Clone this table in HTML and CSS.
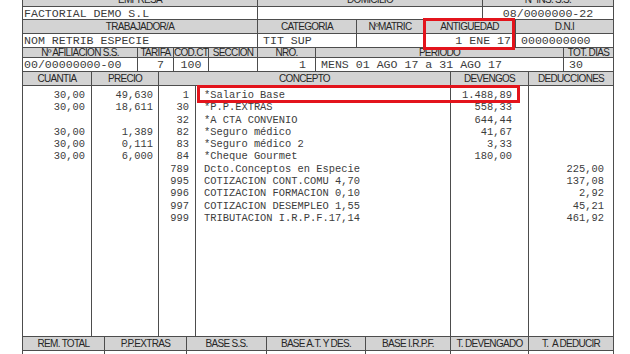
FILE: index.html
```html
<!DOCTYPE html>
<html lang="es">
<head>
<meta charset="utf-8">
<title>Nómina</title>
<link rel="stylesheet" href="styles.css">
</head>
<body>
<div class="sheet">
  <div class="row row-a lbl-row h15">
    <div class="lbl">EMPRESA</div>
    <div class="lbl">DOMICILIO</div>
    <div class="lbl">Nº INS. S.S.</div>
  </div>
  <div class="row row-a h13">
    <div class="val">FACTORIAL DEMO S.L</div>
    <div class="val"></div>
    <div class="val center">08/0000000-22</div>
  </div>
  <div class="row row-b h14">
    <div class="lbl">TRABAJADOR/A</div>
    <div class="lbl">CATEGORIA</div>
    <div class="lbl">NºMATRIC</div>
    <div class="lbl">ANTIGUEDAD</div>
    <div class="lbl">D.N.I</div>
  </div>
  <div class="row row-b h14">
    <div class="val">NOM RETRIB ESPECIE</div>
    <div class="val pad-l">TIT SUP</div>
    <div class="val"></div>
    <div class="val right pad-r4">1 ENE 17</div>
    <div class="val pad-l">0000000000</div>
  </div>
  <div class="row row-c h10">
    <div class="lbl">Nº AFILIACION S.S.</div>
    <div class="lbl">TARIFA</div>
    <div class="lbl">COD.CT</div>
    <div class="lbl">SECCION</div>
    <div class="lbl">NRO.</div>
    <div class="lbl">PERIODO</div>
    <div class="lbl">TOT. DIAS</div>
  </div>
  <div class="row row-c h14">
    <div class="val">00/00000000-00</div>
    <div class="val right pad-r9">7</div>
    <div class="val center">100</div>
    <div class="val"></div>
    <div class="val right pad-r9">1</div>
    <div class="val pad-l">MENS 01 AGO 17 a 31 AGO 17</div>
    <div class="val pad-l">30</div>
  </div>
  <div class="row row-d h14">
    <div class="lbl">CUANTIA</div>
    <div class="lbl">PRECIO</div>
    <div class="lbl">CONCEPTO</div>
    <div class="lbl">DEVENGOS</div>
    <div class="lbl">DEDUCCIONES</div>
  </div>
  <div class="lines">
    <div class="col num pr6">
      <div class="ln">30,00</div><div class="ln">30,00</div><div class="ln"></div><div class="ln">30,00</div><div class="ln">30,00</div><div class="ln">30,00</div>
    </div>
    <div class="col num pr5">
      <div class="ln">49,630</div><div class="ln">18,611</div><div class="ln"></div><div class="ln">1,389</div><div class="ln">0,111</div><div class="ln">6,000</div>
    </div>
    <div class="col num pr6">
      <div class="ln">1</div><div class="ln">30</div><div class="ln">32</div><div class="ln">82</div><div class="ln">83</div><div class="ln">84</div><div class="ln">789</div><div class="ln">995</div><div class="ln">996</div><div class="ln">997</div><div class="ln">999</div>
    </div>
    <div class="col text">
      <div class="ln">*Salario Base</div>
      <div class="ln">*P.P.EXTRAS</div>
      <div class="ln">*A CTA CONVENIO</div>
      <div class="ln">*Seguro médico</div>
      <div class="ln">*Seguro médico 2</div>
      <div class="ln">*Cheque Gourmet</div>
      <div class="ln">Dcto.Conceptos en Especie</div>
      <div class="ln">COTIZACION CONT.COMU 4,70</div>
      <div class="ln">COTIZACION FORMACION 0,10</div>
      <div class="ln">COTIZACION DESEMPLEO 1,55</div>
      <div class="ln">TRIBUTACION I.R.P.F.17,14</div>
    </div>
    <div class="col num pr16">
      <div class="ln">1.488,89</div><div class="ln">558,33</div><div class="ln">644,44</div><div class="ln">41,67</div><div class="ln">3,33</div><div class="ln">180,00</div>
    </div>
    <div class="col num pr9">
      <div class="ln"></div><div class="ln"></div><div class="ln"></div><div class="ln"></div><div class="ln"></div><div class="ln"></div>
      <div class="ln">225,00</div><div class="ln">137,08</div><div class="ln">2,92</div><div class="ln">45,21</div><div class="ln">461,92</div>
    </div>
  </div>
  <div class="row row-e h14">
    <div class="lbl">REM. TOTAL</div>
    <div class="lbl">P.P.EXTRAS</div>
    <div class="lbl">BASE S.S.</div>
    <div class="lbl">BASE A.T. Y DES.</div>
    <div class="lbl">BASE I.R.P.F.</div>
    <div class="lbl">T. DEVENGADO</div>
    <div class="lbl">T.&nbsp; A DEDUCIR</div>
  </div>
  <div class="row row-e h14">
    <div class="val"></div><div class="val"></div><div class="val"></div><div class="val"></div><div class="val"></div><div class="val"></div><div class="val"></div>
  </div>
  <div class="mark mark-antig"></div>
  <div class="mark mark-salario"></div>
</div>
</body>
</html>
```

FILE: styles.css
```css
html, body {
  margin: 0;
  padding: 0;
  background: #ffffff;
}

.sheet {
  position: relative;
  margin: -8px 0 0 22px;
  width: 592px;
  box-sizing: border-box;
  border-right: 1px solid #4d4d4d;
}

.row {
  display: grid;
  box-sizing: border-box;
  border-bottom: 1px solid #4d4d4d;
}

.h15 { height: 15px; }
.h14 { height: 14px; }
.h13 { height: 13px; }
.h10 { height: 10px; }

.row-a { grid-template-columns: 235px 225px 131px; }
.row-b { grid-template-columns: 235px 99px 67px 92px 98px; }
.row-c { grid-template-columns: 115px 36px 35px 49px 58px 248px 50px; }
.row-d { grid-template-columns: 69px 67px 292px 78px 85px; }
.row-e { grid-template-columns: 82px 82px 80px 99px 85px 78px 85px; }

.row > div {
  box-sizing: border-box;
  border-left: 1px solid #4d4d4d;
  display: flex;
  align-items: center;
  overflow: hidden;
  white-space: nowrap;
  min-width: 0;
}

.lbl {
  background: #d3d3d3;
  justify-content: center;
  font-family: "Liberation Sans", Arial, sans-serif;
  font-size: 10px;
  letter-spacing: -0.7px;
  color: #262626;
}

.val {
  font-family: "Liberation Mono", "Courier New", monospace;
  font-size: 11.6px;
  color: #3c3c3c;
  padding-left: 1px;
}

.val.center { justify-content: center; padding-left: 0; }
.val.right { justify-content: flex-end; }
.val.pad-l { padding-left: 5px; }
.val.pad-r4 { padding-right: 4px; }
.val.pad-r9 { padding-right: 9px; }

.lines {
  display: grid;
  grid-template-columns: 69px 67px 37px 255px 78px 85px;
  height: 251px;
  box-sizing: border-box;
  border-bottom: 1px solid #4d4d4d;
}

.col {
  box-sizing: border-box;
  border-left: 1px solid #4d4d4d;
  padding-top: 3px;
  font-family: "Liberation Mono", "Courier New", monospace;
  font-size: 10.4px;
  color: #3c3c3c;
}

.col.num { text-align: right; }
.col.pr5 { padding-right: 5px; }
.col.pr6 { padding-right: 6px; }
.col.pr9 { padding-right: 9px; }
.col.pr16 { padding-right: 16px; }
.col.text { padding-left: 8px; }

.ln {
  height: 12.3px;
  line-height: 12.3px;
  white-space: pre;
}

.mark {
  position: absolute;
  box-sizing: border-box;
  border: 3px solid #e3141c;
}

.mark-antig {
  left: 401px;
  top: 26px;
  width: 92px;
  height: 32px;
}

.mark-salario {
  left: 175px;
  top: 93px;
  width: 323px;
  height: 18px;
}
```
